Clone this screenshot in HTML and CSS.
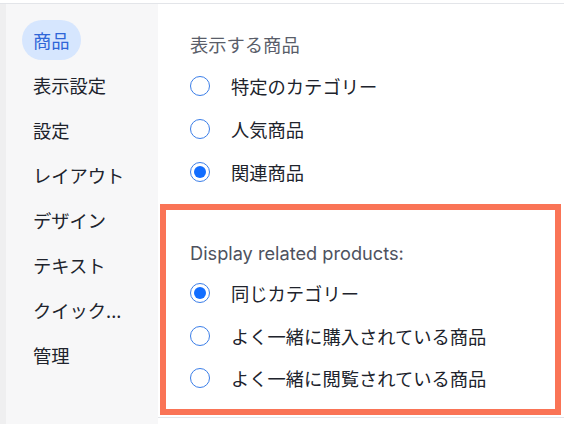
FILE: index.html
```html
<!DOCTYPE html>
<html lang="ja">
<head>
<meta charset="utf-8">
<link rel="stylesheet" href="styles.css">
</head>
<body>
<div class="topbar"></div>
<div class="main">
  <nav class="sidebar">
    <div class="nav-item active"><span class="pill">商品</span></div>
    <div class="nav-item">表示設定</div>
    <div class="nav-item">設定</div>
    <div class="nav-item">レイアウト</div>
    <div class="nav-item">デザイン</div>
    <div class="nav-item">テキスト</div>
    <div class="nav-item">クイック...</div>
    <div class="nav-item">管理</div>
  </nav>
  <section class="content">
    <div class="group">
      <div class="label">表示する商品</div>
      <label class="radio-row"><span class="radio"></span><span class="opt">特定のカテゴリー</span></label>
      <label class="radio-row"><span class="radio"></span><span class="opt">人気商品</span></label>
      <label class="radio-row"><span class="radio checked"></span><span class="opt">関連商品</span></label>
    </div>
    <div class="highlight">
      <div class="label latin">Display related products:</div>
      <label class="radio-row sub"><span class="radio checked"></span><span class="opt">同じカテゴリー</span></label>
      <label class="radio-row sub"><span class="radio"></span><span class="opt">よく一緒に購入されている商品</span></label>
      <label class="radio-row sub"><span class="radio"></span><span class="opt">よく一緒に閲覧されている商品</span></label>
    </div>
    <div class="divider"></div>
  </section>
</div>
</body>
</html>
```

FILE: styles.css
```css
html, body {
  margin: 0;
  padding: 0;
  background: #ffffff;
  font-family: "Noto Sans CJK JP", "Noto Sans", sans-serif;
}
.topbar {
  height: 3px;
  border-bottom: 1px solid #e3e5e9;
  background: #ffffff;
}
.main {
  display: flex;
  height: 420px;
  overflow: hidden;
}
.sidebar {
  width: 152px;
  flex: none;
  border-left: 6px solid #efeff0;
  background: #f7f7f8;
  padding-top: 16px;
  display: flex;
  flex-direction: column;
  gap: 5px;
}
.nav-item {
  height: 40px;
  line-height: 40px;
  padding-left: 27px;
  font-size: 18.3px;
  color: #20232c;
  white-space: nowrap;
}
.nav-item.active {
  padding-left: 16px;
}
.pill {
  display: inline-block;
  height: 40px;
  line-height: 40px;
  padding: 0 11px 0 11px;
  border-radius: 20px;
  background: #d6e6fe;
  color: #2f66d8;
}
.content {
  flex: 1;
  display: flex;
  flex-direction: column;
}
.group {
  padding: 28px 0 0 32px;
}
.label {
  font-size: 18.3px;
  line-height: 24px;
  color: #595d69;
  margin-bottom: 8px;
}
.label.latin {
  font-family: "Inter", "Noto Sans", sans-serif;
  font-size: 18.2px;
  color: #4e525e;
  margin-bottom: 7px;
}
.radio-row {
  display: flex;
  align-items: center;
  height: 43px;
}
.radio-row.sub {
  height: 42.5px;
}
.radio {
  width: 20px;
  height: 20px;
  box-sizing: border-box;
  border: 1px solid #3b7ee8;
  border-radius: 50%;
  flex: none;
  display: flex;
  align-items: center;
  justify-content: center;
}
.radio.checked::after {
  content: "";
  width: 12px;
  height: 12px;
  border-radius: 50%;
  background: #116dff;
}
.opt {
  margin-left: 21px;
  font-size: 18.3px;
  color: #20232c;
  white-space: nowrap;
}
.highlight {
  margin: 11px 3px 0 2px;
  border: 6px solid #fa7456;
  padding: 31px 0 9px 24px;
}
.divider {
  margin-top: 2px;
  border-top: 1px solid #e3e5e9;
}
```
